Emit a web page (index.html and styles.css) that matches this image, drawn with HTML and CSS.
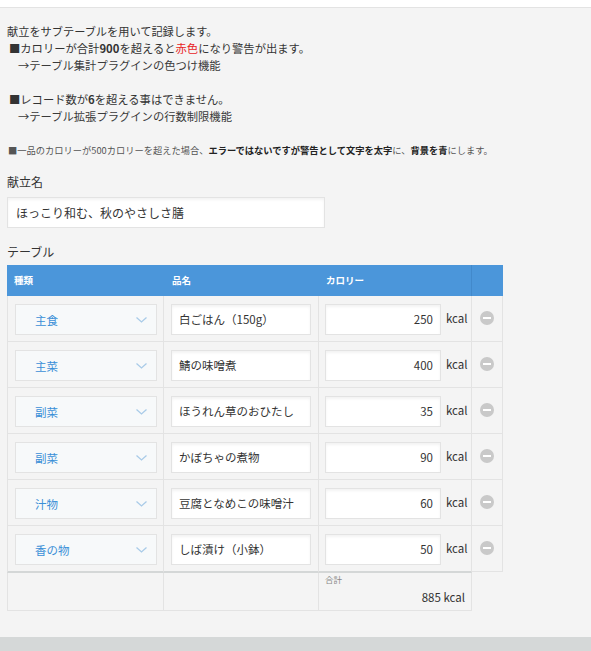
FILE: index.html
```html
<!DOCTYPE html>
<html lang="ja">
<head>
<meta charset="utf-8">
<link rel="stylesheet" href="styles.css">
</head>
<body>
<div class="topbar"></div>
<main class="page">
  <div class="desc">
    <p class="l1">献立をサブテーブルを用いて記録します。</p>
    <p class="l2">■カロリーが合計<b>900</b>を超えると<span class="red">赤色</span>になり警告が出ます。</p>
    <p class="l3">→テーブル集計プラグインの色つけ機能</p>
    <p class="blank"></p>
    <p class="l2">■レコード数が<b>6</b>を超える事はできません。</p>
    <p class="l3">→テーブル拡張プラグインの行数制限機能</p>
    <p class="blank"></p>
    <p class="l8">■一品のカロリーが500カロリーを超えた場合、<b>エラーではないですが警告として文字を太字</b>に、<b>背景を青</b>にします。</p>
  </div>

  <div class="field-label">献立名</div>
  <div class="text-input title-input">ほっこり和む、秋のやさしさ膳</div>

  <div class="field-label table-label">テーブル</div>
  <div class="table">
    <div class="row head">
      <div class="cell">種類</div>
      <div class="cell">品名</div>
      <div class="cell hc3">カロリー</div>
      <div class="cell hc4"></div>
    </div>

    <div class="row body">
      <div class="cell c1"><div class="select"><span>主食</span><svg class="chev" width="11" height="6" viewBox="0 0 11 6"><path d="M0.5 0.5 L5.5 5 L10.5 0.5" fill="none" stroke="#a9cbe8" stroke-width="1.3"/></svg></div></div>
      <div class="cell c2"><div class="text-input">白ごはん（150g）</div></div>
      <div class="cell c3"><div class="text-input num">250</div><span class="unit">kcal</span></div>
      <div class="cell c4"><span class="minus"></span></div>
    </div>
    <div class="row body">
      <div class="cell c1"><div class="select"><span>主菜</span><svg class="chev" width="11" height="6" viewBox="0 0 11 6"><path d="M0.5 0.5 L5.5 5 L10.5 0.5" fill="none" stroke="#a9cbe8" stroke-width="1.3"/></svg></div></div>
      <div class="cell c2"><div class="text-input">鯖の味噌煮</div></div>
      <div class="cell c3"><div class="text-input num">400</div><span class="unit">kcal</span></div>
      <div class="cell c4"><span class="minus"></span></div>
    </div>
    <div class="row body">
      <div class="cell c1"><div class="select"><span>副菜</span><svg class="chev" width="11" height="6" viewBox="0 0 11 6"><path d="M0.5 0.5 L5.5 5 L10.5 0.5" fill="none" stroke="#a9cbe8" stroke-width="1.3"/></svg></div></div>
      <div class="cell c2"><div class="text-input">ほうれん草のおひたし</div></div>
      <div class="cell c3"><div class="text-input num">35</div><span class="unit">kcal</span></div>
      <div class="cell c4"><span class="minus"></span></div>
    </div>
    <div class="row body">
      <div class="cell c1"><div class="select"><span>副菜</span><svg class="chev" width="11" height="6" viewBox="0 0 11 6"><path d="M0.5 0.5 L5.5 5 L10.5 0.5" fill="none" stroke="#a9cbe8" stroke-width="1.3"/></svg></div></div>
      <div class="cell c2"><div class="text-input">かぼちゃの煮物</div></div>
      <div class="cell c3"><div class="text-input num">90</div><span class="unit">kcal</span></div>
      <div class="cell c4"><span class="minus"></span></div>
    </div>
    <div class="row body">
      <div class="cell c1"><div class="select"><span>汁物</span><svg class="chev" width="11" height="6" viewBox="0 0 11 6"><path d="M0.5 0.5 L5.5 5 L10.5 0.5" fill="none" stroke="#a9cbe8" stroke-width="1.3"/></svg></div></div>
      <div class="cell c2"><div class="text-input">豆腐となめこの味噌汁</div></div>
      <div class="cell c3"><div class="text-input num">60</div><span class="unit">kcal</span></div>
      <div class="cell c4"><span class="minus"></span></div>
    </div>
    <div class="row body last">
      <div class="cell c1"><div class="select"><span>香の物</span><svg class="chev" width="11" height="6" viewBox="0 0 11 6"><path d="M0.5 0.5 L5.5 5 L10.5 0.5" fill="none" stroke="#a9cbe8" stroke-width="1.3"/></svg></div></div>
      <div class="cell c2"><div class="text-input">しば漬け（小鉢）</div></div>
      <div class="cell c3"><div class="text-input num">50</div><span class="unit">kcal</span></div>
      <div class="cell c4"><span class="minus"></span></div>
    </div>

    <div class="row foot">
      <div class="cell f1"></div>
      <div class="cell f2"></div>
      <div class="cell f3"><div class="sum-label">合計</div><div class="sum">885 kcal</div></div>
    </div>
  </div>
</main>
<div class="bottombar"></div>
</body>
</html>
```
FILE: styles.css
```css
* { box-sizing: border-box; }
html, body { margin: 0; padding: 0; }
body {
  width: 591px;
  height: 651px;
  background: #f4f4f4;
  font-family: "Noto Sans CJK JP", "Noto Sans", sans-serif;
  color: #333;
  font-size: 11.5px;
  display: flex;
  flex-direction: column;
  overflow: hidden;
}
.topbar {
  height: 8px;
  background: #fff;
  border-bottom: 1px solid #e3e3e3;
  flex: none;
}
.page {
  flex: 1;
  padding: 15px 0 0 7px;
}
.desc p {
  margin: 0;
  height: 17px;
  line-height: 17px;
  white-space: nowrap;
}
.desc .l1 { font-size: 11.2px; }
.desc .l2 { font-size: 11.3px; padding-left: 2px; }
.desc .l3 { font-size: 11.3px; padding-left: 11px; color: #3a3a3a; }
.desc .l8 { font-size: 9.25px; padding-left: 1px; color: #555; }
.desc .l8 b { color: #222; }
.desc b { font-weight: bold; }
.red { color: #e8231e; }

.field-label {
  margin-top: 14px;
  height: 17px;
  line-height: 17px;
  font-size: 12px;
}
.table-label { margin-top: 15px; }

.text-input {
  height: 31px;
  line-height: 29px;
  background: #fff;
  border: 1px solid #e3e3e3;
  box-shadow: inset 0 2px 3px rgba(0,0,0,0.05);
  padding: 0 7px;
  font-size: 11.5px;
  white-space: nowrap;
  color: #333;
}
.title-input {
  margin-top: 7px;
  width: 318px;
  padding-left: 8px;
  font-size: 12px;
}

.table {
  margin-top: 5px;
  width: 496px;
}
.row {
  display: grid;
  grid-template-columns: 157px 155px 153px 31px;
}
.row.foot { grid-template-columns: 157px 155px 153px; }
.head {
  background: #4b96da;
  height: 31px;
}
.head .cell {
  color: #fff;
  font-weight: bold;
  font-size: 9.5px;
  line-height: 31px;
  padding-left: 8px;
}
.head .cell:first-child { padding-left: 7px; }
.head .hc3 { border-right: 1px solid #4289cb; padding-left: 7px; }

.body .cell {
  height: 46px;
  border-right: 1px solid #e3e3e3;
  border-bottom: 1px solid #e3e3e3;
  padding: 8px 0 0 0;
}
.body .c1 { border-left: 1px solid #e3e3e3; padding-left: 7px; padding-right: 6px; }
.body .c2 { padding-left: 7px; padding-right: 7px; }
.body .c3 { padding-left: 6px; display: flex; align-items: flex-start; }
.body .c3 .text-input { width: 116px; text-align: right; padding-right: 7px; }
.body.last .c1, .body.last .c2, .body.last .c3 {
  border-bottom: 2px solid #d4d7d7;
  height: 47px;
}
.body .c4 {
  display: flex;
  justify-content: center;
  padding-top: 15px;
  padding-right: 1px;
}
.unit {
  margin-left: 5px;
  line-height: 29px;
  font-size: 11.5px;
}

.select {
  height: 31px;
  background: #f7f9fa;
  border: 1px solid #e3e3e3;
  display: flex;
  align-items: center;
  justify-content: space-between;
  padding: 0 9px 0 19px;
  color: #3a8fd7;
  font-size: 11.5px;
}
.chev { display: block; margin-top: 1px; }

.minus {
  width: 14px;
  height: 14px;
  border-radius: 50%;
  background: #c9c9c9;
  position: relative;
  display: block;
}
.minus::after {
  content: "";
  position: absolute;
  left: 3px;
  top: 6px;
  width: 8px;
  height: 2px;
  background: #fff;
}

.foot .cell {
  height: 38px;
  border-right: 1px solid #e3e3e3;
  border-bottom: 1px solid #e3e3e3;
}
.foot .f1 { border-left: 1px solid #e3e3e3; }
.foot .f3 { padding: 1px 6px 0 6px; }
.sum-label {
  font-size: 8.5px;
  color: #888;
  line-height: 11px;
}
.sum {
  text-align: right;
  font-size: 11.5px;
  line-height: 17px;
  margin-top: 4px;
}

.bottombar {
  flex: none;
  height: 14px;
  background: #d5d8d8;
}
```
